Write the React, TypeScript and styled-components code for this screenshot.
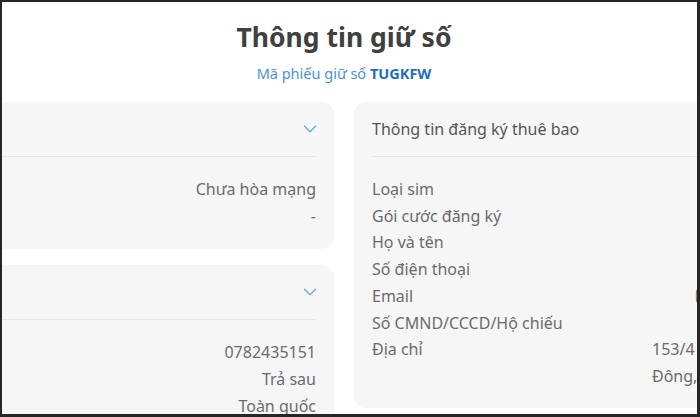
import React from "react";
import styled, { createGlobalStyle } from "styled-components";
import { ChevronDown } from "lucide-react";

const GlobalStyle = createGlobalStyle`
  html, body {
    margin: 0;
    padding: 0;
    background: #ffffff;
    overflow: hidden;
  }
  body {
    font-family: "Noto Sans", "Open Sans", sans-serif;
  }
`;

const Frame = styled.div`
  box-sizing: border-box;
  width: 700px;
  height: 417px;
  border: 2px solid #262626;
  border-right-width: 3px;
  border-bottom-width: 3px;
  overflow: hidden;
  background: #fff;
  padding: 18px 11px 0 0;
`;

const Heading = styled.div`
  display: flex;
  flex-direction: column;
  align-items: center;
  gap: 8px;
  margin-bottom: 19px;
`;

const Title = styled.h1`
  margin: 0;
  font-size: 26.5px;
  line-height: 35px;
  font-weight: 700;
  color: #404040;
`;

const Subtitle = styled.div`
  font-size: 14.5px;
  line-height: 20px;
  color: #4b92d2;

  b {
    color: #1d6dbf;
    font-weight: 700;
  }
`;

const Columns = styled.div`
  display: flex;
  justify-content: center;
  gap: 20px;
`;

const Column = styled.div`
  flex: 0 0 480px;
  display: flex;
  flex-direction: column;
  gap: 16px;
`;

const Card = styled.section`
  background: #f6f6f6;
  border-radius: 12px;
`;

const CardHeader = styled.div`
  height: 54px;
  margin: 0 18px;
  display: flex;
  align-items: center;
  justify-content: space-between;
  border-bottom: 1px solid #e7e7e7;
  font-size: 16px;
  color: #555;
`;

const Chevron = styled(ChevronDown)`
  color: #6aaedb;
  margin-right: -5px;
`;

const Rows = styled.div<{ $bottom: number }>`
  padding: 19px 18px ${(p) => p.$bottom}px;
  display: flex;
  flex-direction: column;
`;

const Row = styled.div`
  display: flex;
  justify-content: space-between;
  align-items: flex-start;
  gap: 16px;
  font-size: 16px;
  line-height: 26.7px;
  color: #6b6b6b;
`;

const Value = styled.span<{ $wide?: boolean }>`
  display: flex;
  flex-direction: column;
  align-items: ${(p) => (p.$wide ? "flex-start" : "flex-end")};
  width: ${(p) => (p.$wide ? "164px" : "auto")};
  white-space: nowrap;
`;

type Item = { label: string; value: string[]; wide?: boolean };

const CardBlock: React.FC<{
  title: string;
  items: Item[];
  collapsible?: boolean;
  bottom?: number;
}> = ({ title, items, collapsible, bottom = 20 }) => (
  <Card>
    <CardHeader>
      <span>{title}</span>
      {collapsible && <Chevron size={22} strokeWidth={1.6} />}
    </CardHeader>
    <Rows $bottom={bottom}>
      {items.map((it) => (
        <Row key={it.label}>
          <span>{it.label}</span>
          <Value $wide={it.wide}>
            {it.value.map((line) => (
              <span key={line}>{line}</span>
            ))}
          </Value>
        </Row>
      ))}
    </Rows>
  </Card>
);

const App: React.FC = () => {
  return (
    <>
      <GlobalStyle />
      <Frame>
        <Heading>
          <Title>Thông tin giữ số</Title>
          <Subtitle>
            Mã phiếu giữ số <b>TUGKFW</b>
          </Subtitle>
        </Heading>
        <Columns>
          <Column>
            <CardBlock
              title="Trạng thái"
              collapsible
              items={[
                { label: "Trạng thái", value: ["Chưa hòa mạng"] },
                { label: "Ngày hòa mạng", value: ["-"] },
              ]}
            />
            <CardBlock
              title="Thông tin số"
              collapsible
              items={[
                { label: "Số thuê bao", value: ["0782435151"] },
                { label: "Loại thuê bao", value: ["Trả sau"] },
                { label: "Phạm vi", value: ["Toàn quốc"] },
              ]}
            />
          </Column>
          <Column>
            <CardBlock
              title="Thông tin đăng ký thuê bao"
              bottom={18}
              items={[
                { label: "Loại sim", value: ["eSIM"] },
                { label: "Gói cước đăng ký", value: ["D159V"] },
                { label: "Họ và tên", value: ["Nguyễn Văn An"] },
                { label: "Số điện thoại", value: ["0912345678"] },
                { label: "Email", value: ["l.nh@gmail.com"] },
                { label: "Số CMND/CCCD/Hộ chiếu", value: ["079123456789"] },
                {
                  label: "Địa chỉ",
                  value: ["153/4 Lê Lợi, P.Tân", "Đông, TP.HCM"],
                  wide: true,
                },
              ]}
            />
          </Column>
        </Columns>
      </Frame>
    </>
  );
};

export default App;
